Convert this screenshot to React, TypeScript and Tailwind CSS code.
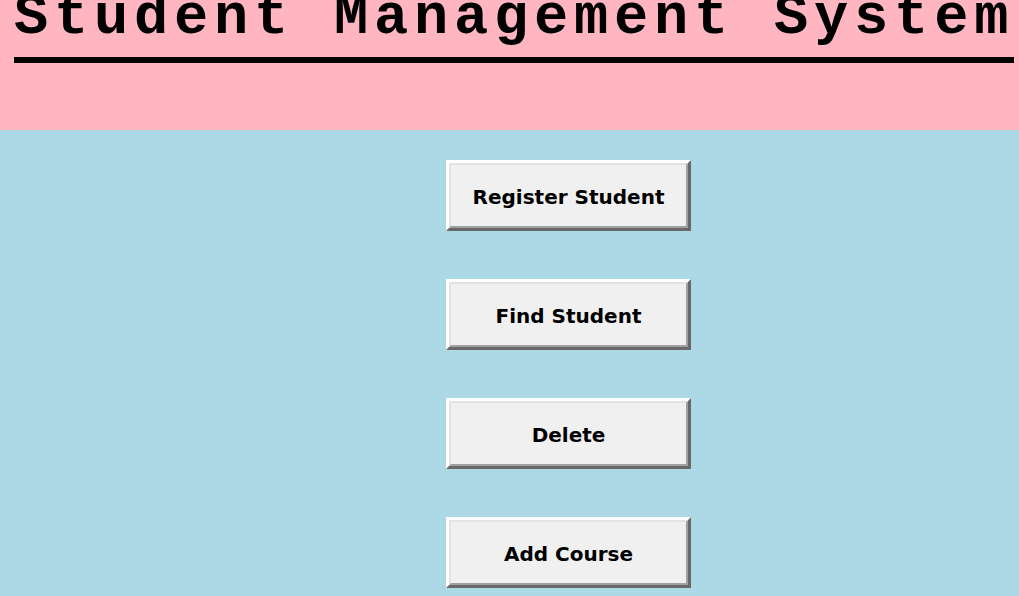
const buttons = ["Register Student", "Find Student", "Delete", "Add Course"];

// raised button, like the old Tk relief
const RaisedButton = ({ label }: { label: string }) => (
  <button className="w-[245px] h-[71px] border-[3px] border-t-white border-l-white border-b-[#696969] border-r-[#696969] bg-[#f0f0f0]">
    <div className="w-full h-full flex items-center justify-center border-2 border-t-[#e3e3e3] border-l-[#e3e3e3] border-b-[#a0a0a0] border-r-[#a0a0a0] pt-[2px]">
      <span className="font-['DejaVu_Sans',sans-serif] font-bold text-[20px] text-black">{label}</span>
    </div>
  </button>
);

export default function App() {
  return (
    <div className="w-[1019px] h-[596px] overflow-hidden bg-[#add8e6]">
      <div className="h-[130px] bg-[#ffb6c1] overflow-hidden">
        <h1 className="ml-[14px] mt-[-10px] w-[1000px] pb-[10px] border-b-[6px] border-black font-['Liberation_Mono',monospace] font-bold text-[57px] tracking-[5.8px] leading-none text-black whitespace-nowrap">
          Student Management System
        </h1>
      </div>
      <div className="flex flex-col items-center pt-[30px] gap-[48px] pl-[118px]">
        {buttons.map((b) => (
          <RaisedButton key={b} label={b} />
        ))}
      </div>
    </div>
  );
}
